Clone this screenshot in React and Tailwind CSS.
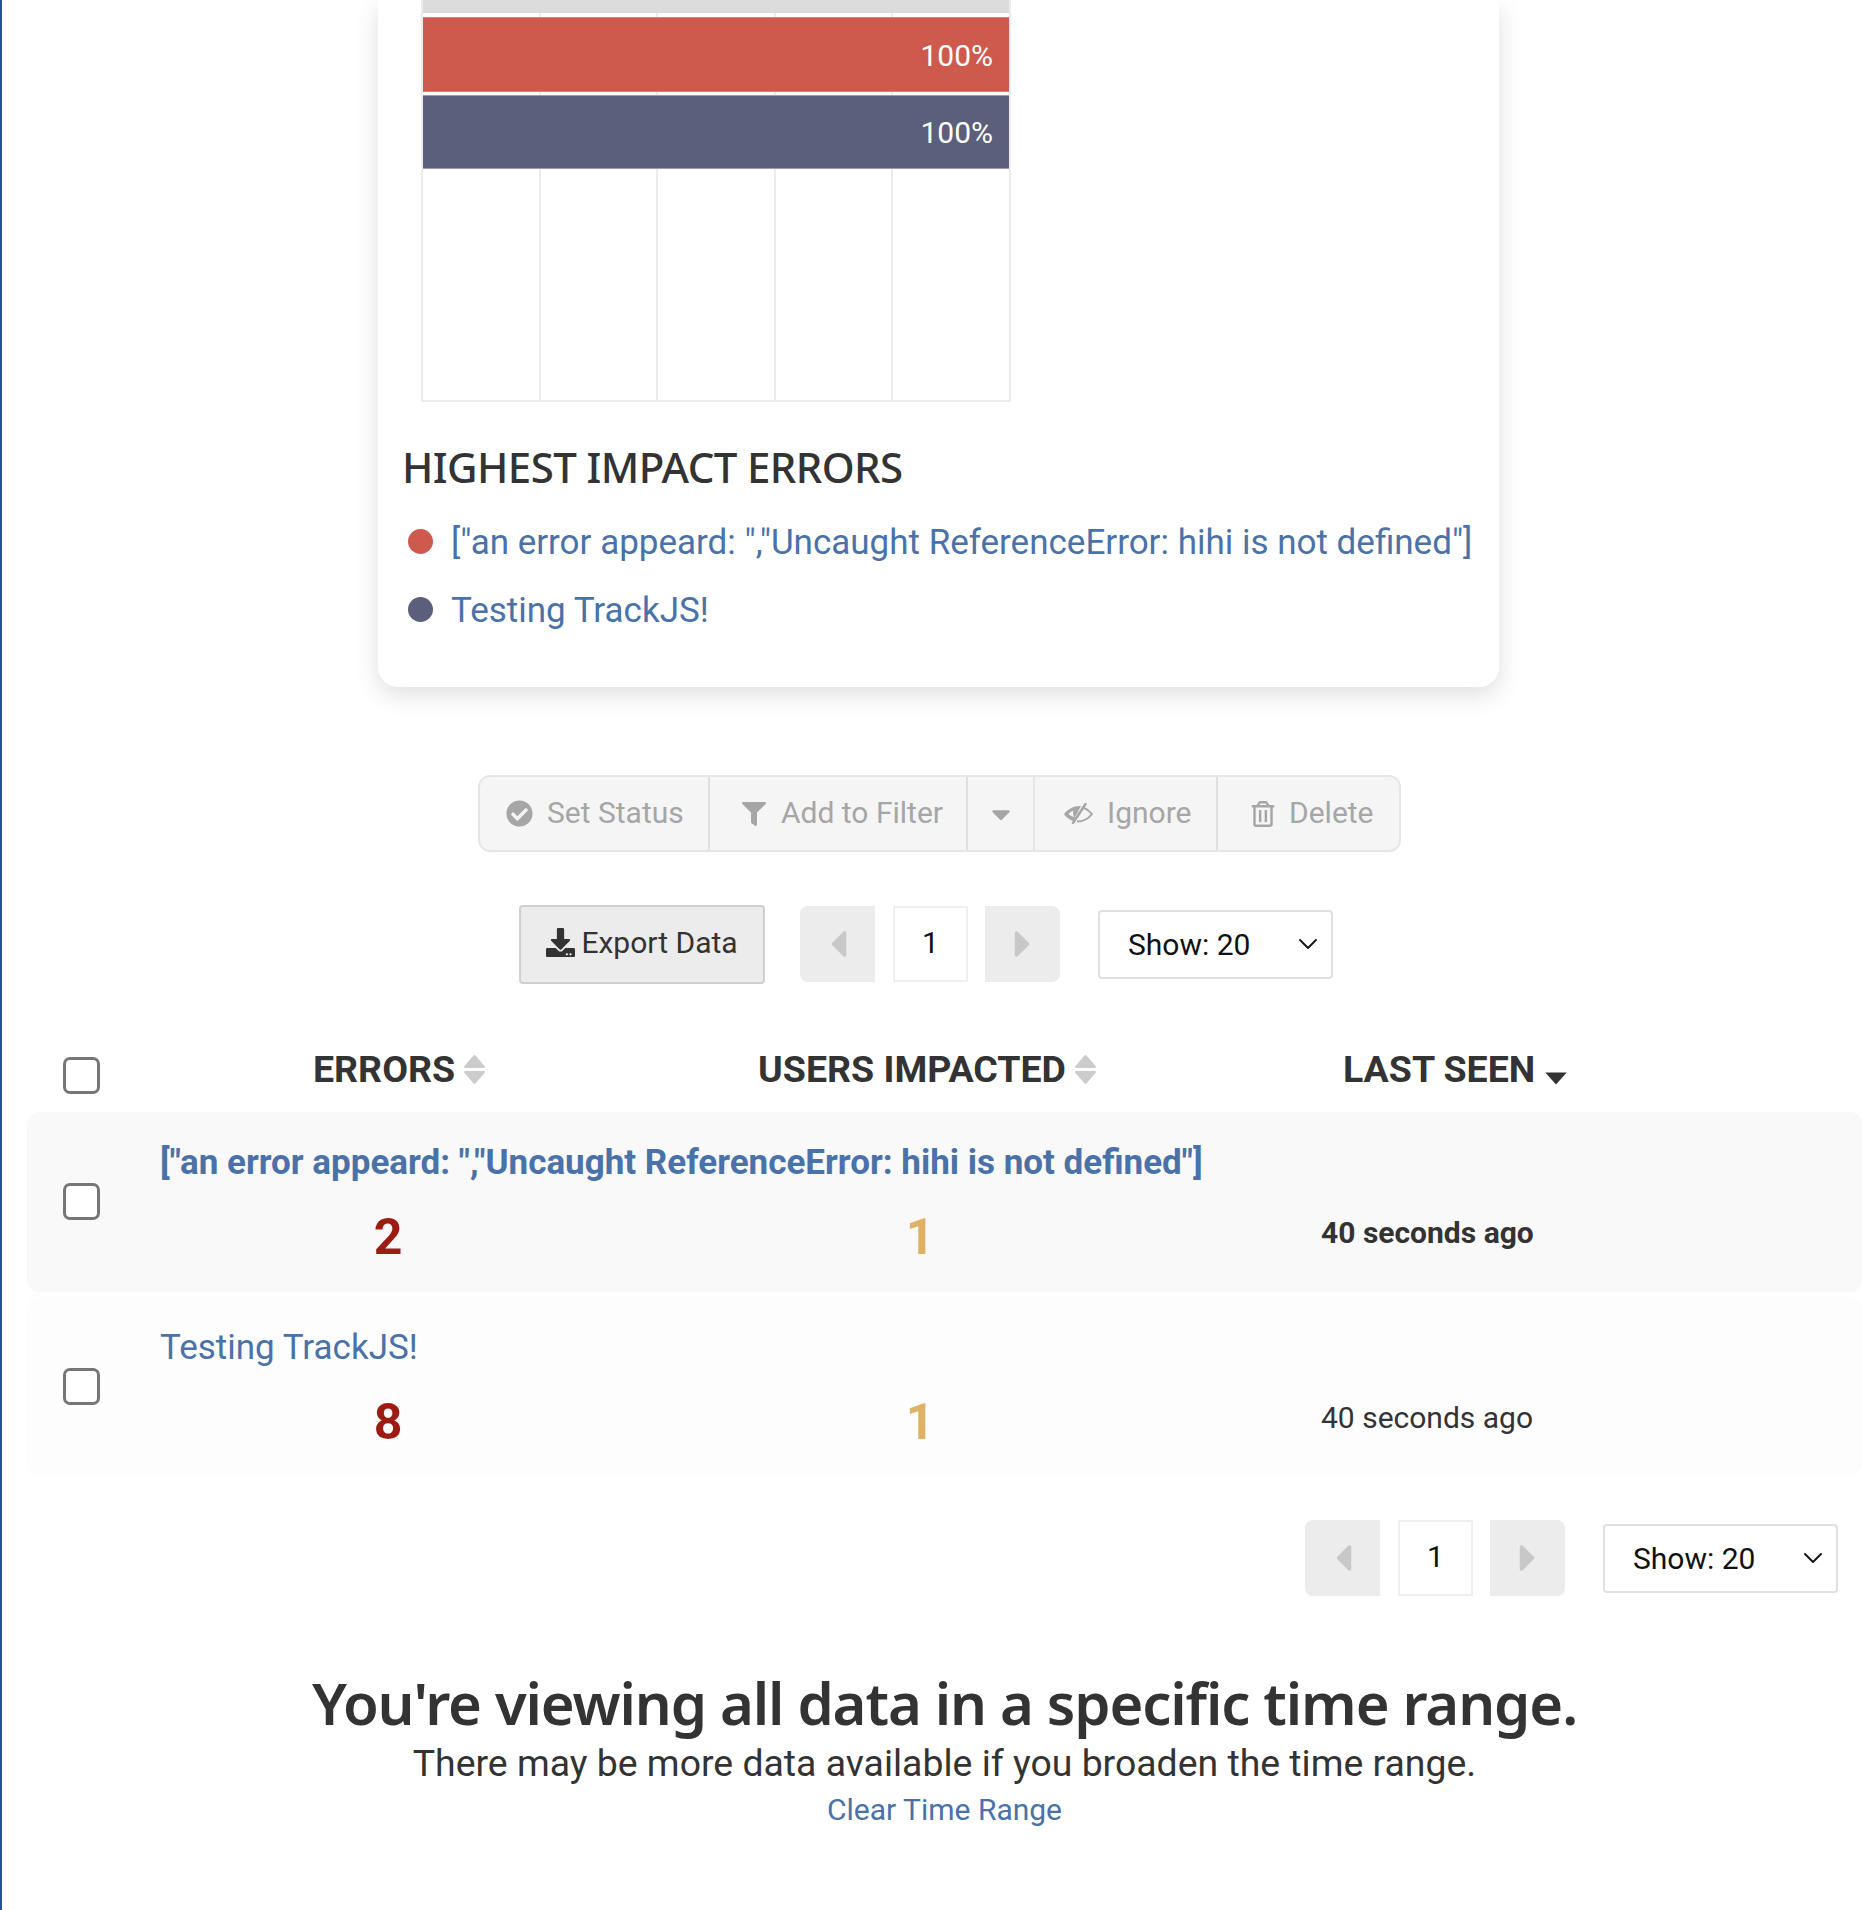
import React from 'react';
import { FaCheckCircle, FaFilter, FaRegTrashAlt, FaDownload, FaCaretDown, FaCaretLeft, FaCaretRight } from 'react-icons/fa';
import { ChevronDown } from 'lucide-react';

const ERROR_TEXT = '["an error appeard: ","Uncaught ReferenceError: hihi is not defined"]';

const Bar = ({ color, edge, height }) => (
    <div className={`relative border-y flex items-center justify-end pr-[16px] pt-[1px] text-white text-[30px] ${height} ${color} ${edge}`}>
        100%
    </div>
);

const SortIcon = () => (
    <svg viewBox="0 0 23 31" className="w-[23px] h-[31px] ml-[8px]" fill="#ccc" stroke="#ccc" strokeWidth="2" strokeLinejoin="round">
        <polygon points="11.5,2 21,13 2,13" />
        <polygon points="2,18 21,18 11.5,29" />
    </svg>
);

const EyeSlashIcon = () => (
    <svg viewBox="0 0 30 21" className="w-[30px] h-[21px]">
        <path d="M1 11 C5 6 11 2.5 18 3 L10 18 C6 16.5 3 14 1 11Z" fill="#a6a6a6" />
        <path d="M5.5 11 C7 9.5 8.5 8.5 10.5 7.5 C9.5 10 10 12 11.5 14 C9 13.5 7 12.5 5.5 11Z" fill="#f5f5f5" />
        <path d="M20 4.5 C24 6 27 8.5 29 11 C26 15 20.5 18.5 14 18.5" fill="none" stroke="#a6a6a6" strokeWidth="2" />
        <path d="M22.5 1 L10 20" fill="none" stroke="#a6a6a6" strokeWidth="2.5" strokeLinecap="round" />
    </svg>
);

const Pager = () => (
    <div className="flex items-center">
        <div className="w-[75px] h-[76px] rounded-l-lg bg-[#ececec] flex items-center justify-center text-[#c8c8c8]">
            <FaCaretLeft className="text-[44px]" />
        </div>
        <div className="ml-[18px] w-[75px] h-[76px] border-2 border-[#efefef] bg-white flex items-center justify-center text-[30px] text-[#111] pb-1">1</div>
        <div className="ml-[17px] w-[75px] h-[76px] rounded-r-lg bg-[#ececec] flex items-center justify-center text-[#c8c8c8]">
            <FaCaretRight className="text-[44px]" />
        </div>
        <div className="ml-[38px] w-[235px] h-[69px] border-2 border-[#e0e0e0] rounded bg-white flex items-center justify-between pl-[28px] pr-[7px] text-[30px] text-[#111]">
            <span>Show: 20</span>
            <ChevronDown className="w-[32px] h-[32px]" strokeWidth={1.4} />
        </div>
    </div>
);

const ToolButton = ({ icon, label, className }) => (
    <div className={`h-full flex items-center border-r-2 border-[#e0e0e0] text-[#a6a6a6] text-[30px] ${className}`}>
        {icon}
        {label && <span className="pb-[2px]">{label}</span>}
    </div>
);

const Checkbox = ({ className }) => (
    <div className={`w-[37px] h-[37px] rounded-[7px] border-[3px] border-[#767676] bg-white shrink-0 ${className || ''}`}></div>
);

const ErrorRow = ({ bg, bold, count, title, rowH, rowMt }) => (
    <div className={`flex items-center rounded-xl ml-[25px] pl-[36px] ${bg} ${rowH} ${rowMt}`}>
        <Checkbox className="mb-[2px]" />
        <div className="ml-[60px] flex-1 pt-[3px]">
            <a className={`block text-[#4a72a8] text-[35px] leading-[42px] ${bold ? 'font-bold' : ''}`}>{title}</a>
            <div className="flex mt-[25px] items-center">
                <div className="w-[456px] text-center text-[#9c1c14] text-[50px] leading-[56px] font-bold">{count}</div>
                <div className="ml-[284px] w-[40px] text-center text-[#dfb165] text-[50px] leading-[56px] font-bold">1</div>
                <div className={`ml-[381px] pb-[9px] text-[#333] text-[30px] ${bold ? 'font-bold' : ''}`}>40 seconds ago</div>
            </div>
        </div>
    </div>
);

const LegendItem = ({ dot, children, className }) => (
    <div className={`flex items-center h-[44px] ${className}`}>
        <span className={`ml-[6px] mb-[2px] w-[25px] h-[25px] rounded-full ${dot}`}></span>
        <a className="ml-[18px] pt-[3px] text-[#4a72a8] text-[35px]">{children}</a>
    </div>
);

const App = () => {
    return (
        <div className="relative h-[1910px] w-full overflow-hidden bg-white border-l-2 border-[#2b4f94] font-['Roboto',sans-serif] text-[#333]">
            {/* chart card */}
            <div className="ml-[376px] w-[1121px] h-[687px] bg-white rounded-b-[20px] shadow-[0_8px_24px_rgba(0,0,0,0.13)] pl-[43px]">
                <div className="relative w-[590px] h-[402px] border-b-2 border-[#ececec]">
                    <div className="absolute inset-0 flex border-l-2 border-[#ececec]">
                        <div className="flex-1 border-r-2 border-[#ececec]"></div>
                        <div className="flex-1 border-r-2 border-[#ececec]"></div>
                        <div className="flex-1 border-r-2 border-[#ececec]"></div>
                        <div className="flex-1 border-r-2 border-[#ececec]"></div>
                        <div className="flex-1 border-r-2 border-[#ececec]"></div>
                    </div>
                    <div className="relative mx-[2px]">
                        <div className="h-[13px] bg-[#dcdcdc]"></div>
                        <div className="mt-[4px]"><Bar color="bg-[#cd5a4d]" edge="border-[#d9807a]" height="h-[75px]" /></div>
                        <div className="mt-[3px]"><Bar color="bg-[#5b5f7b]" edge="border-[#9a9db0]" height="h-[74px]" /></div>
                    </div>
                </div>
                <h3 className="ml-[-19px] mt-[42px] font-['Noto_Sans',sans-serif] font-medium text-[42px] leading-[46px] tracking-[-0.6px] text-[#333]">HIGHEST IMPACT ERRORS</h3>
                <div className="ml-[-19px] mt-[30px]">
                    <LegendItem dot="bg-[#cd5a4d]">{ERROR_TEXT}</LegendItem>
                    <LegendItem dot="bg-[#5b5f7b]" className="mt-[24px]">Testing TrackJS!</LegendItem>
                </div>
            </div>

            {/* bulk actions */}
            <div className="mt-[88px] ml-[476px] w-[923px] h-[77px] flex rounded-xl border-2 border-[#e6e6e6] bg-[#f5f5f5]">
                <ToolButton className="w-[230px] pl-[26px] gap-[14px]" icon={<FaCheckCircle className="text-[27px]" />} label="Set Status" />
                <ToolButton className="w-[258px] pl-[32px] gap-[15px]" icon={<FaFilter className="text-[24px]" />} label="Add to Filter" />
                <ToolButton className="w-[67px] justify-center border-[#e6e6e6]" icon={<FaCaretDown className="text-[30px]" />} />
                <ToolButton className="w-[183px] pl-[28px] gap-[14px]" icon={<EyeSlashIcon />} label="Ignore" />
                <div className="flex-1 h-full flex items-center pl-[32px] gap-[13px] text-[#a6a6a6] text-[30px]">
                    <FaRegTrashAlt className="text-[26px]" />
                    <span className="pb-[2px]">Delete</span>
                </div>
            </div>

            {/* export + paging */}
            <div className="mt-[53px] ml-[517px] flex items-center">
                <div className="w-[246px] h-[79px] rounded border-2 border-[#cfcfcf] bg-[#ececec] flex items-center justify-center gap-[6px] pb-[4px] text-[30px] text-[#333]">
                    <FaDownload className="text-[29px]" />
                    <span>Export Data</span>
                </div>
                <div className="ml-[35px] mb-[1px]"><Pager /></div>
            </div>

            {/* table header */}
            <div className="mt-[61px] flex items-center h-[60px]">
                <div className="ml-[61px]"><Checkbox /></div>
                <div className="ml-[213px] mb-[12px] flex items-center font-bold text-[37.5px]">ERRORS<SortIcon /></div>
                <div className="ml-[272px] mb-[12px] flex items-center font-bold text-[37.5px]">USERS IMPACTED<SortIcon /></div>
                <div className="ml-[246px] mb-[12px] flex items-center font-bold text-[37.5px]">
                    LAST SEEN
                    <svg viewBox="0 0 22 13" className="w-[24px] h-[14px] ml-[9px] mt-[18px]" fill="#333"><path d="M1 1.5 H21 L11 12.5 Z" /></svg>
                </div>
            </div>

            {/* rows */}
            <ErrorRow bg="bg-[#f9f9f9]" bold count="2" title={ERROR_TEXT} rowH="h-[180px]" rowMt="mt-[7px]" />
            <ErrorRow bg="bg-[#fdfdfd]" count="8" title="Testing TrackJS!" rowH="h-[180px]" rowMt="mt-[5px]" />

            {/* bottom paging */}
            <div className="mt-[43px] ml-[1303px]"><Pager /></div>

            {/* time range note */}
            <div className="mt-[75px] pl-[25px] text-center">
                <h2 className="font-['Noto_Sans',sans-serif] font-semibold text-[58px] leading-[64px] tracking-[-1.1px] text-[#333]">You're viewing all data in a specific time range.</h2>
                <p className="mt-[6px] text-[37.4px] leading-[44px] text-[#333]">There may be more data available if you broaden the time range.</p>
                <a className="block mt-[6px] text-[30px] leading-[38px] text-[#4a72a8]">Clear Time Range</a>
            </div>
        </div>
    );
};

export default App;
